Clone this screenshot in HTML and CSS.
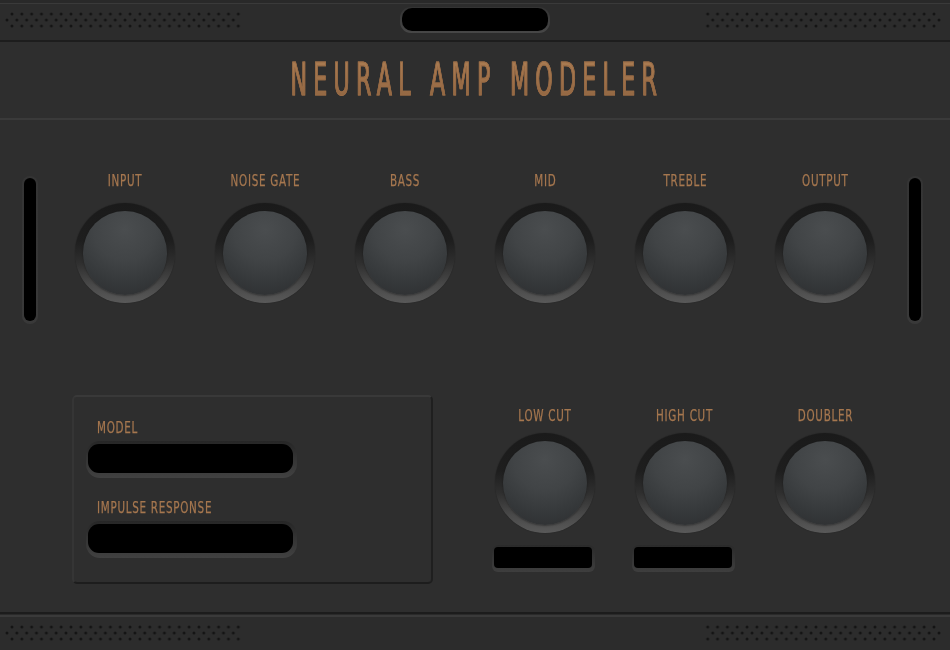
FILE: index.html
```html
<!DOCTYPE html>
<html lang="en">
<head>
<meta charset="utf-8">
<title>Neural Amp Modeler</title>
<link rel="stylesheet" href="styles.css">
</head>
<body>
<div class="app">
  <header class="topbar">
    <svg class="dots dots-top" width="240" height="24" viewBox="0 0 240 24" aria-hidden="true">
      <defs>
        <pattern id="dotsA" patternUnits="userSpaceOnUse" x="5.08" y="0" width="9.84" height="12">
          <circle cx="4.92" cy="6" r="1.5" fill="#141414"/>
        </pattern>
        <pattern id="dotsB" patternUnits="userSpaceOnUse" x="0.08" y="0" width="9.84" height="24">
          <circle cx="4.92" cy="12" r="1.5" fill="#141414"/>
        </pattern>
      </defs>
      <rect x="5.08" y="0" width="236.16" height="24" fill="url(#dotsA)"/>
      <rect x="0.08" y="0" width="236.16" height="24" fill="url(#dotsB)"/>
    </svg>
    <div class="display"><div class="display-inner"></div></div>
    <svg class="dots dots-top dots-right" width="240" height="24" viewBox="0 0 240 24" aria-hidden="true">
      <rect x="5.08" y="0" width="236.16" height="24" fill="url(#dotsA)"/>
      <rect x="0.08" y="0" width="236.16" height="24" fill="url(#dotsB)"/>
    </svg>
  </header>

  <div class="titlebar">
    <h1 class="title">NEURAL AMP MODELER</h1>
  </div>

  <main class="main">
    <section class="knob-row">
      <div class="meter"><div class="meter-inner"></div></div>
      <div class="knobs">
        <div class="knob-col"><span class="label">INPUT</span><div class="knob"><div class="cap"></div></div></div>
        <div class="knob-col"><span class="label">NOISE GATE</span><div class="knob"><div class="cap"></div></div></div>
        <div class="knob-col"><span class="label">BASS</span><div class="knob"><div class="cap"></div></div></div>
        <div class="knob-col"><span class="label">MID</span><div class="knob"><div class="cap"></div></div></div>
        <div class="knob-col"><span class="label">TREBLE</span><div class="knob"><div class="cap"></div></div></div>
        <div class="knob-col"><span class="label">OUTPUT</span><div class="knob"><div class="cap"></div></div></div>
      </div>
      <div class="meter"><div class="meter-inner"></div></div>
    </section>

    <section class="lower">
      <div class="panel">
        <span class="label panel-label">MODEL</span>
        <div class="field"><div class="field-inner"></div></div>
        <span class="label panel-label panel-label-2">IMPULSE RESPONSE</span>
        <div class="field"><div class="field-inner"></div></div>
      </div>
      <div class="lower-knobs">
        <div class="knob-col knob-col-lower">
          <span class="label">LOW CUT</span>
          <div class="knob knob-lower"><div class="cap"></div></div>
          <div class="valuebox"><div class="valuebox-inner"></div></div>
        </div>
        <div class="knob-col knob-col-lower">
          <span class="label">HIGH CUT</span>
          <div class="knob knob-lower"><div class="cap"></div></div>
          <div class="valuebox"><div class="valuebox-inner"></div></div>
        </div>
        <div class="knob-col knob-col-lower">
          <span class="label">DOUBLER</span>
          <div class="knob knob-lower"><div class="cap"></div></div>
        </div>
      </div>
    </section>
  </main>

  <footer class="bottombar">
    <svg class="dots dots-bottom" width="240" height="24" viewBox="0 0 240 24" aria-hidden="true">
      <rect x="5.08" y="0" width="236.16" height="24" fill="url(#dotsA)"/>
      <rect x="0.08" y="0" width="236.16" height="24" fill="url(#dotsB)"/>
    </svg>
    <svg class="dots dots-bottom dots-right" width="240" height="24" viewBox="0 0 240 24" aria-hidden="true">
      <rect x="5.08" y="0" width="236.16" height="24" fill="url(#dotsA)"/>
      <rect x="0.08" y="0" width="236.16" height="24" fill="url(#dotsB)"/>
    </svg>
  </footer>
</div>
</body>
</html>
```

FILE: styles.css
```css
* { box-sizing: border-box; }

html, body {
  margin: 0;
  padding: 0;
  background: #2e2e2e;
}

body {
  width: 950px;
  height: 650px;
  overflow: hidden;
  font-family: "DejaVu Sans Condensed", "DejaVu Sans", sans-serif;
}

.app {
  width: 950px;
  height: 650px;
  display: flex;
  flex-direction: column;
  background: #2e2e2e;
}

/* ---------- top bar ---------- */
.topbar {
  height: 42px;
  flex: none;
  display: grid;
  grid-template-columns: 1fr auto 1fr;
  align-items: start;
  background: #2c2c2c;
  border-bottom: 2px solid #1d1d1d;
  box-shadow: inset 0 3px 0 #292929, inset 0 4px 0 #3a3a3a;
}

.dots { display: block; }

.dots-top { margin-top: 8px; margin-left: 2px; justify-self: start; }

.dots-right {
  justify-self: end;
  margin-left: 0;
  margin-right: 6px;
  transform: scaleX(-1);
}

.display {
  margin-top: 7px;
  width: 150px;
  height: 26px;
  padding: 1px 2px 2px 2px;
  border-radius: 11px;
  background: linear-gradient(180deg, #333 0%, #3f3f3f 60%, #474747 100%);
}

.display-inner {
  width: 100%;
  height: 100%;
  border-radius: 10px;
  background: #000;
}

/* ---------- title ---------- */
.titlebar {
  height: 78px;
  flex: none;
  display: flex;
  align-items: center;
  justify-content: center;
  border-bottom: 2px solid #3a3a3a;
}

.title {
  margin: 0 0 0 4px;
  display: inline-block;
  font-family: "DejaVu Sans Condensed", "DejaVu Sans", sans-serif;
  font-weight: normal;
  font-size: 44px;
  line-height: 44px;
  letter-spacing: 11.2px;
  white-space: nowrap;
  transform: scaleX(0.56);
  color: #9d6f48;
  background: linear-gradient(180deg, #ab7d53 0%, #9d6f48 55%, #8e6441 100%);
  -webkit-background-clip: text;
  background-clip: text;
  -webkit-text-fill-color: transparent;
  -webkit-text-stroke: 1.1px #9a6c46;
}

/* ---------- main ---------- */
.main {
  flex: 1;
  padding-top: 52px;
}

.label {
  display: block;
  margin-top: 1px;
  height: 16px;
  font-size: 16px;
  line-height: 16px;
  letter-spacing: 1px;
  white-space: nowrap;
  color: #a6774f;
  -webkit-text-stroke: 0.25px #a6774f;
  transform: scaleX(0.72);
}

.knob-row {
  display: flex;
  align-items: flex-start;
  padding-left: 22px;
}

.meter {
  margin-top: 4px;
  width: 16px;
  height: 148px;
  flex: none;
  padding: 2px 2px 3px 2px;
  border-radius: 8px;
  background: linear-gradient(180deg, #343434, #393939);
}

.meter-inner {
  width: 100%;
  height: 100%;
  border-radius: 6px;
  background: #000;
}

.knobs {
  display: grid;
  grid-template-columns: repeat(6, 140px);
  margin: 0 12px 0 17px;
}

.knob-col {
  display: flex;
  flex-direction: column;
  align-items: center;
}

.knob {
  margin-top: 14px;
  width: 100px;
  height: 100px;
  border-radius: 50%;
  display: flex;
  align-items: center;
  justify-content: center;
  background: linear-gradient(180deg, #1a1a1a 0%, #1e1e1e 38%, #2f2f2f 60%, #494949 82%, #595959 100%);
  box-shadow: 0 0 1px rgba(0, 0, 0, 0.5);
}

.cap {
  width: 84px;
  height: 84px;
  border-radius: 50%;
  background: radial-gradient(circle at 50% 22%, #4a4d4f 0%, #414446 40%, #35383a 70%, #2b2c2e 100%);
  box-shadow: 0 1px 2px rgba(0, 0, 0, 0.35);
}

/* ---------- lower section ---------- */
.lower {
  margin-top: 71px;
  display: flex;
  align-items: flex-start;
  padding-left: 72px;
}

.panel {
  width: 361px;
  height: 189px;
  flex: none;
  border: 2px solid;
  border-color: #393939 #1f1f1f #1d1d1d #353535;
  border-radius: 5px;
  padding: 22px 0 0 12px;
  display: flex;
  flex-direction: column;
  align-items: flex-start;
  background: #2e2e2e;
}

.panel-label {
  margin-left: 11px;
  transform-origin: left center;
}

.panel-label-2 { margin-top: 22px; }

.field {
  margin-top: 5px;
  width: 211px;
  height: 37px;
  padding: 3px 4px 5px 2px;
  border-radius: 14px;
  background: linear-gradient(180deg, #262626 0%, #333 45%, #414141 100%);
}

.field-inner {
  width: 100%;
  height: 100%;
  border-radius: 11px;
  background: #000;
}

.lower-knobs {
  display: grid;
  grid-template-columns: repeat(3, 140px);
  margin-left: 42px;
}

.knob-col-lower { padding-top: 12px; }

.knob-lower { margin-top: 9px; }

.valuebox {
  margin-top: 12px;
  margin-left: -3px;
  width: 103px;
  height: 27px;
  padding: 2px 3px 4px 2px;
  border-radius: 6px;
  background: linear-gradient(180deg, #2a2a2a 0%, #343434 50%, #3e3e3e 100%);
}

.valuebox-inner {
  width: 100%;
  height: 100%;
  border-radius: 4px;
  background: #000;
}

/* ---------- bottom bar ---------- */
.bottombar {
  height: 38px;
  flex: none;
  display: flex;
  justify-content: space-between;
  align-items: flex-start;
  background: #2c2c2c;
  border-top: 2px solid #1c1c1c;
  box-shadow: inset 0 1px 0 #2a2a2a, inset 0 3px 0 #3a3a3a;
}

.dots-bottom { margin-top: 7px; margin-left: 2px; }

.bottombar .dots-right { margin-left: 0; margin-right: 6px; }
```
